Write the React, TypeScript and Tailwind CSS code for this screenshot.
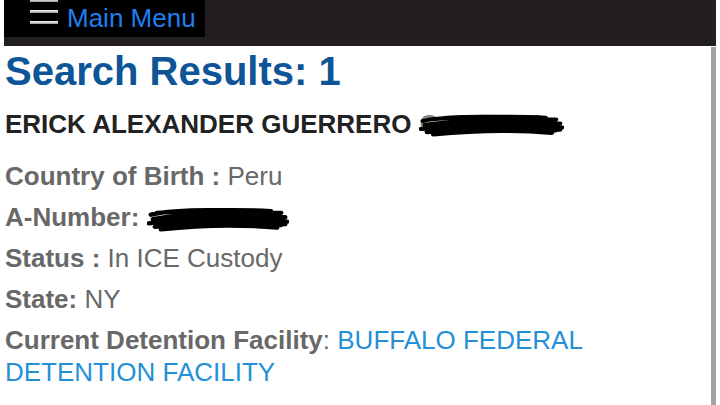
import React from 'react';

const Scribble = ({ width, height }: { width: number; height: number }) => (
  <svg width={width} height={height} viewBox="0 0 140 30" preserveAspectRatio="none" className="block">
    <path
      d="M4 10 C30 3, 80 4, 132 8 M6 15 C40 7, 90 9, 136 13 M2 20 C50 12, 100 13, 138 18 M8 24 C40 17, 90 17, 132 22 M10 8 C50 4, 100 4, 122 6 M14 27 C60 21, 100 22, 128 25 M6 18 C50 14, 100 16, 136 21"
      fill="none"
      stroke="#000"
      strokeWidth={5}
      strokeLinecap="round"
    />
  </svg>
);

type TField = {
  label: string;
  sep: string;
  value?: string;
  link?: boolean;
  redacted?: boolean;
};

const fields: TField[] = [
  { label: 'Country of Birth :', sep: ' ', value: 'Peru' },
  { label: 'A-Number:', sep: ' ', redacted: true },
  { label: 'Status :', sep: ' ', value: 'In ICE Custody' },
  { label: 'State:', sep: ' ', value: 'NY' },
  { label: 'Current Detention Facility', sep: ': ', value: 'BUFFALO FEDERAL DETENTION FACILITY', link: true },
];

export default function App() {
  return (
    <div className="w-[720px] h-[405px] overflow-hidden bg-white px-[4px] font-['Liberation_Sans',Arial,sans-serif]">
      <div className="h-[46px] bg-[#231f20] flex items-start">
        <div className="h-[37px] w-[201px] bg-black flex items-start relative">
          <div className="absolute left-[26px] -top-[1px] w-[28px] flex flex-col gap-[8px]">
            <div className="h-[3px] bg-gradient-to-b from-white to-[#999]" />
            <div className="h-[3px] bg-gradient-to-b from-white to-[#999]" />
            <div className="h-[3px] bg-gradient-to-b from-white to-[#999]" />
          </div>
          <span className="ml-[63px] text-[26px] leading-[32px] text-[#1f7ff0] mt-[2px]">Main Menu</span>
        </div>
      </div>
      <div className="border-r-[5px] border-[#a3a3a3] h-[359px] pl-[1px]">
        <h1 className="text-[40px] leading-[48px] font-bold text-[#0e5597] mt-[1px]">Search Results: 1</h1>
        <div className="mt-[13px] text-[26px] leading-[32px] font-bold text-[#222] flex items-center">
          <span>ERICK ALEXANDER GUERRERO</span>
          <span className="relative ml-[8px] inline-block w-[140px] h-[32px]">
            <span className="absolute left-0 top-0 text-[#888]">C</span>
            <span className="absolute left-[108px] top-0 text-[#888]">A</span>
            <span className="absolute left-0 top-[5px]">
              <Scribble width={145} height={24} />
            </span>
          </span>
        </div>
        <div className="mt-[20px] flex flex-col gap-[9px] text-[26px] leading-[32px] text-[#686868]">
          {fields.map((f) => (
            <div key={f.label} className="pr-[20px]">
              <span className="font-bold">{f.label}</span>
              {f.redacted ? (
                <span className="relative inline-block align-middle ml-[8px] w-[140px] h-[28px] -mt-[4px]">
                  <span className="absolute left-0 top-[3px]">
                    <Scribble width={142} height={26} />
                  </span>
                </span>
              ) : (
                <>
                  <span>{f.sep}</span>
                  <span className={f.link ? 'text-[#2490d6]' : ''}>{f.value}</span>
                </>
              )}
            </div>
          ))}
        </div>
      </div>
    </div>
  );
}
